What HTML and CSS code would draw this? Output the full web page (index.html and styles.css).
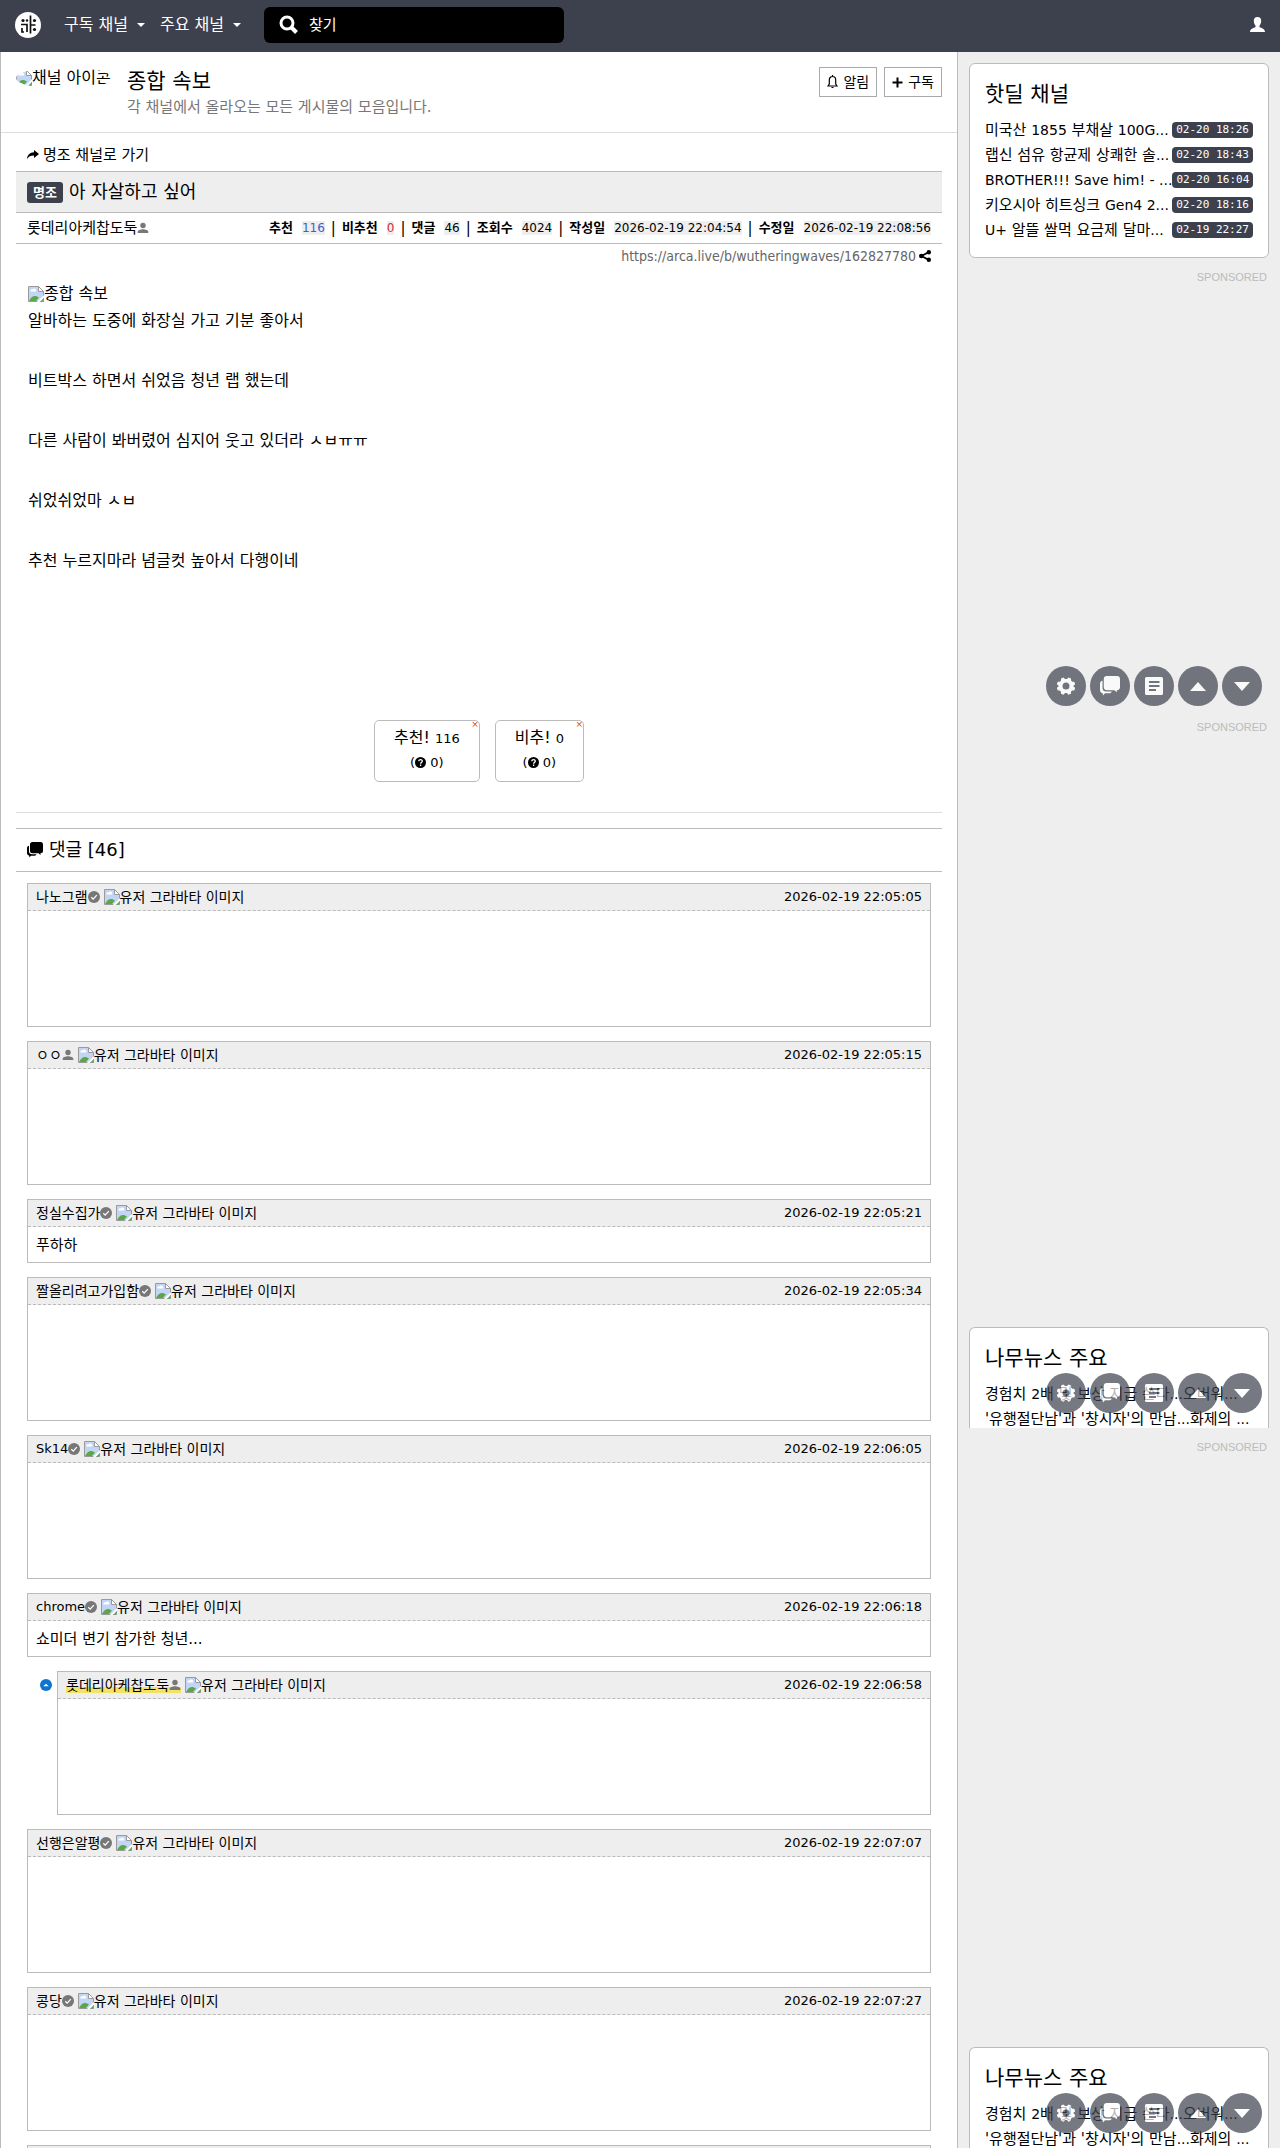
FILE: index.html
```
<!DOCTYPE html>
<html lang="ko">
<head>
  <meta charset="utf-8">
  <title>아 자살하고 싶어 - 종합 속보</title>
  <meta name="viewport" content="width=device-width, initial-scale=1.0">
  <link rel="stylesheet" href="styles.css">
</head>
<body>

  <!-- icon sprite -->
  <svg class="sprite" aria-hidden="true">
    <symbol id="i-broken" viewBox="0 0 16 16">
      <path d="M.5.5h10l5 5v10H.5z" fill="#c3d5f5" stroke="#9a9a9a"/>
      <path d="M2.500 5.500a1.500 1.500 0 0 1 2-2 2 2 0 0 1 3.500 2z" fill="#fff"/>
      <path d="M1 15c2-4 5-6 8-4.500l2 1L8 15z" fill="#5aa746"/>
      <path d="M10.500.5v5h5z" fill="#fff" stroke="#9a9a9a"/>
      <path d="M16 9L9 16h2.500L16 11.500z" fill="#fff"/>
      <path d="M12.500 15.500h3v-3z" fill="#5aa746"/>
    </symbol>
    <symbol id="i-check" viewBox="0 0 12 12">
      <circle cx="6" cy="6" r="6" fill="#777"/>
      <path d="M3.300 6.200l1.900 1.900 3.600-4" fill="none" stroke="#fff" stroke-width="1.300"/>
    </symbol>
    <symbol id="i-person" viewBox="0 0 12 12">
      <circle cx="6" cy="3.500" r="2.700" fill="#777"/>
      <path d="M.7 11V9.800C.7 8.200 3.500 7.200 6 7.200s5.300 1 5.300 2.600V11z" fill="#777"/>
    </symbol>
    <symbol id="i-chat" viewBox="0 0 16 16">
      <path d="M5.500 0h8A2.500 2.500 0 0 1 16 2.500v6.300a2.500 2.500 0 0 1-2.500 2.500V13l-2-1.700h-6A2.500 2.500 0 0 1 3 8.800V2.500A2.500 2.500 0 0 1 5.500 0z"/>
      <path d="M2 3.800v5.700a3 3 0 0 0 3 2.800h4.500c-.5 1-1.300 1.500-2.500 1.500H4L2.300 15.500V13.700C.9 13.500 0 12.500 0 11.300V6.200C0 5 .8 4 2 3.800z"/>
    </symbol>
    <symbol id="i-gear" viewBox="0 0 18 18">
      <path fill-rule="evenodd" d="M6.500.5L8 2h2l1.500-1.500 2.500 1 .1 2.100 1.100 1.100 2 .1 1 2.500L16.500 8.500v1l1.700 1.500-1 2.500-2.100.1-1.100 1.100-.1 2-2.500 1L10 16H8l-1.500 1.700-2.500-1-.1-2-1.100-1.100-2-.1-1-2.500L1.500 9.500v-1L-.2 7.300l1-2.500 2.100-.1L4 3.600l.1-2.100zM9 5.600a3.500 3.500 0 1 0 0 7 3.500 3.500 0 0 0 0-7z"/>
    </symbol>
    <symbol id="i-doc" viewBox="0 0 18 18">
      <path fill-rule="evenodd" d="M1.500 0h15A1.500 1.500 0 0 1 18 1.500v15a1.500 1.500 0 0 1-1.500 1.500h-15A1.500 1.500 0 0 1 0 16.500v-15A1.500 1.500 0 0 1 1.500 0zM4 4v2h10.500V4zm0 4v2h10.500V8zm0 4v2h7v-2z"/>
    </symbol>
    <symbol id="i-up" viewBox="0 0 16 9"><path d="M8 0l8 9H0z"/></symbol>
    <symbol id="i-down" viewBox="0 0 16 9"><path d="M8 9L0 0h16z"/></symbol>
    <symbol id="i-help" viewBox="0 0 11 11">
      <circle cx="5.500" cy="5.500" r="5.500"/>
      <path d="M3.800 4.300c0-2.200 3.500-2.200 3.500 0 0 1.100-1.700 1.100-1.700 2.400M5.600 7.600v1.300" fill="none" stroke="#fff" stroke-width="1.300"/>
    </symbol>
    <symbol id="i-reply" viewBox="0 0 12 12">
      <circle cx="6" cy="6" r="6" fill="#0d75d1"/>
      <path d="M3.300 7.300L6 4.700l2.700 2.600z" fill="#fff"/>
    </symbol>
  </svg>

  <nav class="navbar">
    <a class="brand" href="#" aria-label="홈">
      <svg width="26" height="26" viewBox="0 0 26 26">
        <circle cx="13" cy="13" r="13" fill="#fff"/>
        <g fill="none" stroke="#111" stroke-width="1.700">
          <path d="M6 12.500h6V20M15.500 3.500v18M15.500 13h5M7 16v4h2"/>
        </g>
        <g fill="#111"><circle cx="8" cy="8.500" r="1.600"/><circle cx="12" cy="8.500" r="1.200"/><circle cx="19.500" cy="8.500" r="1.600"/><circle cx="19.500" cy="17.500" r="1.600"/></g>
      </svg>
    </a>
    <a class="nav-link" href="#">구독 채널<span class="caret"></span></a>
    <a class="nav-link" href="#">주요 채널<span class="caret"></span></a>
    <form class="search">
      <label for="q" aria-label="찾기">
        <svg width="19" height="19" viewBox="0 0 19 19" fill="none" stroke="#fff" stroke-width="3"><circle cx="8" cy="8" r="6"/><path d="M12 12l5.500 5.500" stroke-width="4"/></svg>
      </label>
      <input id="q" type="text" placeholder="찾기">
    </form>
    <a class="user" href="#" aria-label="로그인">
      <svg width="15" height="15" viewBox="0 0 15 15" fill="#fff"><path d="M7.500 0C10 0 11.200 1.600 11.200 4c0 1.800-.8 3.500-1.700 4.500v1.700c2 .6 5.500 1.800 5.500 4.800H0c0-3 3.500-4.200 5.500-4.800V8.500C4.600 7.500 3.800 5.800 3.800 4 3.800 1.600 5 0 7.500 0z"/></svg>
    </a>
  </nav>

  <div class="layout">
    <main class="board">
      <header class="channel">
        <a class="channel-icon" href="#"><svg width="16" height="16"><use href="#i-broken"/></svg>채널 아이콘</a>
        <div class="channel-text">
          <h1>종합 속보</h1>
          <p>각 채널에서 올라오는 모든 게시물의 모음입니다.</p>
        </div>
        <div class="channel-actions">
          <button type="button"><svg width="11" height="14" viewBox="0 0 11 14" fill="none" stroke="#000" stroke-width="1.200"><path d="M1 11h9L8.700 9V5c0-2-1.200-3.500-3.200-3.500S2.300 3 2.300 5v4zM4.500 12.500h2M5.500 0v1.500"/></svg>알림</button>
          <button type="button"><svg width="11" height="11" viewBox="0 0 11 11" stroke="#000" stroke-width="2"><path d="M5.500.5v10M.5 5.500h10"/></svg>구독</button>
        </div>
      </header>

      <article class="article">
        <a class="go-channel" href="#"><svg width="12" height="10" viewBox="0 0 12 10"><path d="M7 0l5 4-5 4V5.500C3.500 5.500 1.500 6.500 0 9c.3-4 2.800-6.500 7-6.700z"/></svg>명조 채널로 가기</a>
        <div class="title-row">
          <span class="category">명조</span>
          <h2>아 자살하고 싶어</h2>
        </div>
        <div class="info-row">
          <span class="author">롯데리아케찹도둑<svg width="12" height="12"><use href="#i-person"/></svg></span>
          <div class="stats">
            <b>추천</b><span class="val up">116</span><i>|</i>
            <b>비추천</b><span class="val down">0</span><i>|</i>
            <b>댓글</b><span class="val">46</span><i>|</i>
            <b>조회수</b><span class="val">4024</span><i>|</i>
            <b>작성일</b><time class="val">2026-02-19 22:04:54</time><i>|</i>
            <b>수정일</b><time class="val">2026-02-19 22:08:56</time>
          </div>
        </div>
        <div class="link-row">
          <a href="#">https://arca.live/b/wutheringwaves/162827780</a>
          <svg width="12" height="12" viewBox="0 0 12 12"><path d="M10 2L2.500 6l7.500 4" fill="none" stroke="#000" stroke-width="1.800"/><circle cx="9.800" cy="2.200" r="2.200"/><circle cx="2.300" cy="6" r="2.300"/><circle cx="9.800" cy="9.800" r="2.200"/></svg>
        </div>

        <div class="content">
          <div class="alt"><svg width="16" height="16"><use href="#i-broken"/></svg>종합 속보</div>
          <p>알바하는 도중에 화장실 가고 기분 좋아서</p>
          <p>비트박스 하면서 쉬었음 청년 랩 했는데</p>
          <p>다른 사람이 봐버렸어 심지어 웃고 있더라 ㅅㅂㅠㅠ</p>
          <p>쉬었쉬었마 ㅅㅂ</p>
          <p>추천 누르지마라 념글컷 높아서 다행이네</p>
        </div>

        <div class="votes">
          <button type="button">
            <span class="vote-main">추천! <small>116</small></span>
            <span class="vote-sub">(<svg width="11" height="11"><use href="#i-help"/></svg> 0)</span>
            <span class="vote-x">×</span>
          </button>
          <button type="button">
            <span class="vote-main">비추! <small>0</small></span>
            <span class="vote-sub">(<svg width="11" height="11"><use href="#i-help"/></svg> 0)</span>
            <span class="vote-x">×</span>
          </button>
        </div>
      </article>

      <section class="comments">
        <h2><svg width="16" height="16"><use href="#i-chat"/></svg>댓글 [46]</h2>

        <div class="comment-list">
          <div class="comment">
            <div class="comment-head"><span class="name">나노그램</span><svg width="12" height="12"><use href="#i-check"/></svg><span class="avatar"><svg width="16" height="16"><use href="#i-broken"/></svg>유저 그라바타 이미지</span><time>2026-02-19 22:05:05</time></div>
            <div class="comment-emoticon"></div>
          </div>
          <div class="comment">
            <div class="comment-head"><span class="name">ㅇㅇ</span><svg width="12" height="12"><use href="#i-person"/></svg><span class="avatar"><svg width="16" height="16"><use href="#i-broken"/></svg>유저 그라바타 이미지</span><time>2026-02-19 22:05:15</time></div>
            <div class="comment-emoticon"></div>
          </div>
          <div class="comment">
            <div class="comment-head"><span class="name">정실수집가</span><svg width="12" height="12"><use href="#i-check"/></svg><span class="avatar"><svg width="16" height="16"><use href="#i-broken"/></svg>유저 그라바타 이미지</span><time>2026-02-19 22:05:21</time></div>
            <p class="comment-text">푸하하</p>
          </div>
          <div class="comment">
            <div class="comment-head"><span class="name">짤올리려고가입함</span><svg width="12" height="12"><use href="#i-check"/></svg><span class="avatar"><svg width="16" height="16"><use href="#i-broken"/></svg>유저 그라바타 이미지</span><time>2026-02-19 22:05:34</time></div>
            <div class="comment-emoticon"></div>
          </div>
          <div class="comment">
            <div class="comment-head"><span class="name latin">Sk14</span><svg width="12" height="12"><use href="#i-check"/></svg><span class="avatar"><svg width="16" height="16"><use href="#i-broken"/></svg>유저 그라바타 이미지</span><time>2026-02-19 22:06:05</time></div>
            <div class="comment-emoticon"></div>
          </div>
          <div class="comment">
            <div class="comment-head"><span class="name latin">chrome</span><svg width="12" height="12"><use href="#i-check"/></svg><span class="avatar"><svg width="16" height="16"><use href="#i-broken"/></svg>유저 그라바타 이미지</span><time>2026-02-19 22:06:18</time></div>
            <p class="comment-text">쇼미더 변기 참가한 청년...</p>
          </div>
          <div class="reply">
            <svg class="reply-icon" width="12" height="12"><use href="#i-reply"/></svg>
            <div class="comment">
              <div class="comment-head"><span class="name writer">롯데리아케찹도둑<svg width="12" height="12"><use href="#i-person"/></svg></span><span class="avatar"><svg width="16" height="16"><use href="#i-broken"/></svg>유저 그라바타 이미지</span><time>2026-02-19 22:06:58</time></div>
              <div class="comment-emoticon"></div>
            </div>
          </div>
          <div class="comment">
            <div class="comment-head"><span class="name">선행은알평</span><svg width="12" height="12"><use href="#i-check"/></svg><span class="avatar"><svg width="16" height="16"><use href="#i-broken"/></svg>유저 그라바타 이미지</span><time>2026-02-19 22:07:07</time></div>
            <div class="comment-emoticon"></div>
          </div>
          <div class="comment">
            <div class="comment-head"><span class="name">콩당</span><svg width="12" height="12"><use href="#i-check"/></svg><span class="avatar"><svg width="16" height="16"><use href="#i-broken"/></svg>유저 그라바타 이미지</span><time>2026-02-19 22:07:27</time></div>
            <div class="comment-emoticon"></div>
          </div>
          <div class="comment">
            <div class="comment-head"></div>
            <div class="comment-emoticon"></div>
          </div>
        </div>
      </section>
    </main>

    <aside class="sidebar">
      <section class="box">
        <h3>핫딜 채널</h3>
        <ul>
          <li><a href="#">미국산 <span class="en">1855</span> 부채살 <span class="en">100G...</span></a><time>02-20 18:26</time></li>
          <li><a href="#">랩신 섬유 항균제 상쾌한 솔<span class="en">...</span></a><time>02-20 18:43</time></li>
          <li><a href="#"><span class="en">BROTHER!!! Save him! - ...</span></a><time>02-20 16:04</time></li>
          <li><a href="#">키오시아 히트싱크 <span class="en">Gen4 2...</span></a><time>02-20 18:16</time></li>
          <li><a href="#"><span class="en">U+</span> 알뜰 쌀먹 요금제 달마<span class="en">...</span></a><time>02-19 22:27</time></li>
        </ul>
      </section>

      <div class="ad ad-short">
        <span class="ad-label">SPONSORED</span>
        <div class="quick">
          <button type="button" aria-label="설정"><svg width="18" height="18"><use href="#i-gear"/></svg></button>
          <button type="button" aria-label="댓글"><svg width="20" height="20"><use href="#i-chat"/></svg></button>
          <button type="button" aria-label="본문"><svg width="18" height="18"><use href="#i-doc"/></svg></button>
          <button type="button" aria-label="위로"><svg width="16" height="9"><use href="#i-up"/></svg></button>
          <button type="button" aria-label="아래로"><svg width="16" height="9"><use href="#i-down"/></svg></button>
        </div>
      </div>

      <div class="ad ad-tall">
        <span class="ad-label">SPONSORED</span>
        <section class="box news">
          <h3>나무뉴스 주요</h3>
          <ul>
            <li><a href="#">경험치 <span class="en">2</span>배 및 보상 지급 쓴다<span class="en">...</span>오버워<span class="en">...</span></a></li>
            <li><a href="#">'유행절단남'과 '창시자'의 만남<span class="en">...</span>화제의 <span class="en">...</span></a></li>
          </ul>
        </section>
        <div class="quick">
          <button type="button" aria-label="설정"><svg width="18" height="18"><use href="#i-gear"/></svg></button>
          <button type="button" aria-label="댓글"><svg width="20" height="20"><use href="#i-chat"/></svg></button>
          <button type="button" aria-label="본문"><svg width="18" height="18"><use href="#i-doc"/></svg></button>
          <button type="button" aria-label="위로"><svg width="16" height="9"><use href="#i-up"/></svg></button>
          <button type="button" aria-label="아래로"><svg width="16" height="9"><use href="#i-down"/></svg></button>
        </div>
      </div>

      <div class="ad ad-tall">
        <span class="ad-label">SPONSORED</span>
        <section class="box news">
          <h3>나무뉴스 주요</h3>
          <ul>
            <li><a href="#">경험치 <span class="en">2</span>배 및 보상 지급 쓴다<span class="en">...</span>오버워<span class="en">...</span></a></li>
            <li><a href="#">'유행절단남'과 '창시자'의 만남<span class="en">...</span>화제의 <span class="en">...</span></a></li>
          </ul>
        </section>
        <div class="quick">
          <button type="button" aria-label="설정"><svg width="18" height="18"><use href="#i-gear"/></svg></button>
          <button type="button" aria-label="댓글"><svg width="20" height="20"><use href="#i-chat"/></svg></button>
          <button type="button" aria-label="본문"><svg width="18" height="18"><use href="#i-doc"/></svg></button>
          <button type="button" aria-label="위로"><svg width="16" height="9"><use href="#i-up"/></svg></button>
          <button type="button" aria-label="아래로"><svg width="16" height="9"><use href="#i-down"/></svg></button>
        </div>
      </div>
    </aside>
  </div>

</body>
</html>
```

FILE: styles.css
```
* {
  box-sizing: border-box;
}

body {
  margin: 0;
  background: #eee;
  color: #000;
  font-family: "DejaVu Sans", "Noto Sans CJK KR", sans-serif;
  font-size: 16px;
  line-height: 24px;
}

a {
  color: inherit;
  text-decoration: none;
}

h1, h2, h3, p, ul {
  margin: 0;
  padding: 0;
  font-weight: normal;
}

button {
  font: inherit;
  color: inherit;
  cursor: pointer;
}

svg {
  flex-shrink: 0;
}

.sprite {
  display: none;
}

/* Navbar */
.navbar {
  display: flex;
  align-items: center;
  height: 52px;
  padding: 0 15px 3px;
  background: #3d414d;
  color: #fff;
}

.brand {
  display: flex;
  margin-right: 23px;
}

.nav-link {
  display: flex;
  align-items: center;
  gap: 9px;
  margin-right: 15px;
}

.caret {
  border: 4px solid transparent;
  border-top-color: #fff;
  border-bottom: 0;
}

.search {
  display: flex;
  align-items: center;
  gap: 11px;
  width: 300px;
  height: 36px;
  margin-left: 8px;
  padding: 0 15px;
  border-radius: 6px;
  background: #000;
}

.search label {
  display: flex;
}

.search input {
  flex: 1;
  min-width: 0;
  padding: 0;
  border: 0;
  background: none;
  color: #fff;
  font: inherit;
  font-size: 15px;
}

.search input::placeholder {
  color: #fff;
}

.user {
  display: flex;
  margin-left: auto;
}

/* Page columns */
.layout {
  display: flex;
  height: calc(100vh - 52px);
  overflow: hidden;
}

.board {
  flex: 1;
  min-width: 0;
  height: max-content;
  border: 1px solid #bbb;
  border-width: 0 1px;
  background: #fff;
}

.sidebar {
  width: 322px;
  padding: 11px;
}

/* Channel header */
.channel {
  display: flex;
  height: 81px;
  padding: 15px 15px 0;
  border-bottom: 1px solid #ddd;
}

.channel-icon {
  display: flex;
  align-items: center;
  width: 96px;
  height: 22px;
  overflow: hidden;
  border-radius: 50%;
  white-space: nowrap;
}

.channel-text {
  margin-left: 15px;
}

.channel-text h1 {
  font-size: 21px;
  line-height: 28px;
}

.channel-text p {
  color: #777;
  font-size: 15px;
  line-height: 24px;
}

.channel-actions {
  display: flex;
  gap: 7px;
  margin-left: auto;
}

.channel-actions button {
  display: flex;
  align-items: center;
  gap: 5px;
  height: 30px;
  padding: 0 7px;
  border: 1px solid #aaa;
  background: #fff;
  font-size: 14px;
}

/* Article */
.article {
  margin: 0 15px;
  border-bottom: 1px solid #ddd;
}

.go-channel {
  display: flex;
  align-items: center;
  gap: 4px;
  padding: 10px 11px 4px;
  font-size: 15px;
}

.title-row {
  display: flex;
  align-items: center;
  gap: 6px;
  height: 42px;
  padding: 0 11px;
  border: 1px solid #bbb;
  border-width: 1px 0;
  background: #eee;
}

.title-row h2 {
  font-size: 18px;
}

.category {
  padding: 0 6px;
  border-radius: 3px;
  background: #3d414d;
  color: #fff;
  font-size: 13px;
  font-weight: bold;
  line-height: 21px;
}

.info-row {
  display: flex;
  align-items: center;
  justify-content: space-between;
  height: 31px;
  padding: 0 11px;
  border-bottom: 1px solid #bbb;
}

.author {
  display: flex;
  align-items: center;
  font-size: 15px;
}

.stats {
  display: flex;
  align-items: center;
  font-size: 12px;
  line-height: 14px;
}

.stats b {
  margin-right: 9px;
  font-size: 13px;
}

.stats i {
  margin: 0 6px;
  font-size: 15px;
  font-style: normal;
}

.val {
  background: #eee;
}

.up {
  color: #3a5fd0;
}

.down {
  color: #c33;
}

.link-row {
  display: flex;
  align-items: center;
  justify-content: flex-end;
  gap: 3px;
  padding: 0 11px;
  color: #666;
  font-family: "DejaVu Sans Condensed", "DejaVu Sans", sans-serif;
  font-size: 14px;
}

.content {
  min-height: 401px;
  padding: 14px 12px 0;
}

.alt {
  display: flex;
  align-items: center;
}

.content p {
  margin: 3px 0 36px;
}

.content p + p {
  margin-top: 0;
}

.votes {
  display: flex;
  justify-content: center;
  gap: 15px;
  padding: 51px 0 30px;
}

.votes button {
  position: relative;
  display: flex;
  flex-direction: column;
  align-items: center;
  height: 62px;
  padding: 5px 19px;
  border: 1px solid #bbb;
  border-radius: 5px;
  background: #fff;
}

.vote-main small {
  font-size: 13px;
}

.vote-sub {
  font-size: 13px;
}

.vote-sub svg {
  vertical-align: -1px;
}

.vote-x {
  position: absolute;
  top: 0;
  right: 0;
  color: #d43f3a;
  font-size: 9px;
  line-height: 6px;
}

/* Comments */
.comments {
  margin: 15px 15px 0;
}

.comments h2 {
  display: flex;
  align-items: center;
  gap: 6px;
  height: 44px;
  padding: 0 11px;
  border: 1px solid #bbb;
  border-width: 1px 0;
  font-size: 18px;
}

.comment-list {
  display: flex;
  flex-direction: column;
  gap: 14px;
  padding: 11px;
}

.comment {
  border: 1px solid #bbb;
}

.comment-head {
  display: flex;
  align-items: center;
  height: 27px;
  padding: 0 8px;
  border-bottom: 1px dashed #bbb;
  background: #eee;
  font-size: 14px;
}

.comment-head time {
  margin-left: auto;
  font-size: 13px;
}

.latin {
  font-size: 13px;
}

.avatar {
  display: flex;
  align-items: center;
  margin-left: 4px;
}

.comment-emoticon {
  height: 115px;
}

.comment-text {
  height: 35px;
  padding: 6px 8px;
  font-size: 15px;
}

.reply {
  display: flex;
  gap: 5px;
  padding-left: 13px;
}

.reply .comment {
  flex: 1;
}

.reply-icon {
  margin-top: 8px;
}

.writer {
  display: flex;
  align-items: center;
  height: 16px;
  background: linear-gradient(transparent 65%, #f2e266 65%);
}

/* Sidebar */
.box {
  padding: 16px 15px 15px;
  border: 1px solid #bbb;
  border-radius: 6px;
  background: #fff;
}

.box h3 {
  margin-bottom: 9px;
  font-size: 21px;
  line-height: 28px;
}

.box ul {
  list-style: none;
}

.box li {
  display: flex;
  align-items: center;
  justify-content: space-between;
  height: 25px;
  font-size: 15px;
  white-space: nowrap;
}

.en {
  font-size: 14px;
}

.box li time {
  padding: 0 4px;
  border-radius: 4px;
  background: #3d414d;
  color: #fff;
  font-family: "DejaVu Sans Mono", monospace;
  font-size: 11px;
  line-height: 16px;
}

.ad {
  position: relative;
}

.ad-short {
  height: 450px;
}

.ad-tall {
  height: 720px;
}

.ad-label {
  display: block;
  padding: 11px 2px 0;
  color: #bbb;
  font: 11px/16px "Liberation Sans", sans-serif;
  text-align: right;
}

.news {
  position: absolute;
  bottom: 0;
  width: 100%;
  height: 101px;
  overflow: hidden;
  border-bottom: 0;
  border-radius: 6px 6px 0 0;
}

/* Quick buttons float over the boxes */
.quick {
  position: absolute;
  right: 7px;
  bottom: 15px;
  display: flex;
  gap: 4px;
}

.ad-short .quick {
  bottom: 2px;
}

.quick button {
  display: flex;
  align-items: center;
  justify-content: center;
  width: 40px;
  height: 40px;
  padding: 0;
  border: 0;
  border-radius: 50%;
  background: #3d414d;
  opacity: 0.7;
}

.quick svg {
  fill: #fff;
}
```
